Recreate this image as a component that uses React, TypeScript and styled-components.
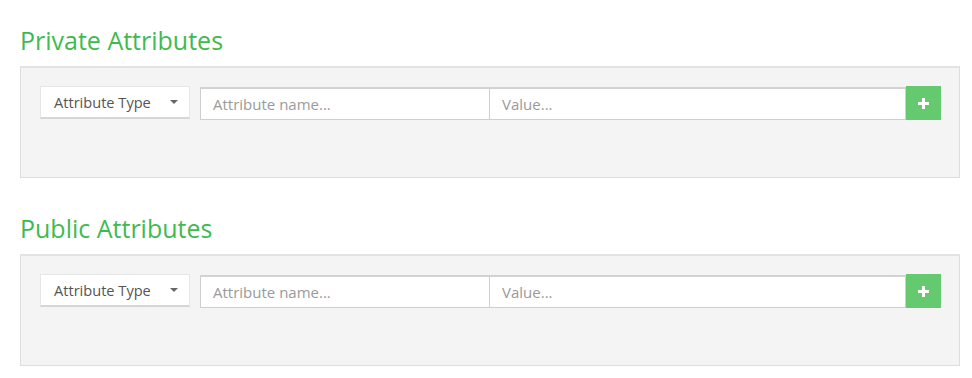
import styled, { createGlobalStyle } from "styled-components";

const Global = createGlobalStyle`
    body {
        margin: 0;
        background: #ffffff;
        font-family: "Open Sans", "Noto Sans", sans-serif;
        overflow: hidden;
    }
`;

const Page = styled.div`
    padding: 24px 12px 0 20px;
    width: 940px;
`;

const Section = styled.section`
    margin-bottom: 34px;
    &:last-child {
        margin-bottom: 0;
    }
`;

const Title = styled.h2`
    margin: 0 0 10px;
    font-size: 25px;
    font-weight: 400;
    line-height: 32px;
    color: #3fba4f;
`;

const Panel = styled.div`
    height: 112px;
    box-sizing: border-box;
    background: #f4f4f4;
    border: 1px solid #dddddd;
    border-top: 2px solid #e3e3e3;
    padding: 18px 18px 0 19px;
`;

const Row = styled.div`
    display: flex;
    align-items: flex-start;
`;

const Select = styled.button`
    display: flex;
    align-items: center;
    justify-content: space-between;
    width: 150px;
    height: 33px;
    margin-right: 10px;
    padding: 0 11px 0 13px;
    background: #ffffff;
    border: 1px solid #e6e6e6;
    border-bottom: 2px solid #d6d6d6;
    font-family: inherit;
    font-size: 14.6px;
    color: #555555;
`;

const Caret = styled.span`
    width: 0;
    height: 0;
    border-left: 4px solid transparent;
    border-right: 4px solid transparent;
    border-top: 4px solid #666666;
`;

const Field = styled.input<{ $w: number; $joined?: boolean }>`
    width: ${(p) => p.$w}px;
    height: 33px;
    box-sizing: border-box;
    margin: 1px 0 0;
    padding: 0 12px;
    background: #ffffff;
    border: 1px solid #cfcfcf;
    border-top: 2px solid #d2d2d2;
    border-left-width: ${(p) => (p.$joined ? 0 : 1)}px;
    font-family: inherit;
    font-size: 15px;
    color: #555555;
    outline: none;
    &::placeholder {
        color: #9a9a9a;
    }
`;

const Add = styled.button`
    width: 35px;
    height: 34px;
    display: flex;
    align-items: center;
    justify-content: center;
    background: #64c96f;
    border: none;
    padding: 0;
`;

function Plus() {
    return (
        <svg width="11" height="11" viewBox="0 0 11 11">
            <rect x="4" y="0" width="3" height="11" fill="#fff" />
            <rect x="0" y="4" width="11" height="3" fill="#fff" />
        </svg>
    );
}

function AttributeBox({ title }: { title: string }) {
    return (
        <Section>
            <Title>{title}</Title>
            <Panel>
                <Row>
                    <Select>
                        Attribute Type
                        <Caret />
                    </Select>
                    <Field $w={290} placeholder="Attribute name..." />
                    <Field $w={416} $joined placeholder="Value..." />
                    <Add>
                        <Plus />
                    </Add>
                </Row>
            </Panel>
        </Section>
    );
}

export default function App() {
    return (
        <>
            <Global />
            <Page>
                <AttributeBox title="Private Attributes" />
                <AttributeBox title="Public Attributes" />
            </Page>
        </>
    );
}
